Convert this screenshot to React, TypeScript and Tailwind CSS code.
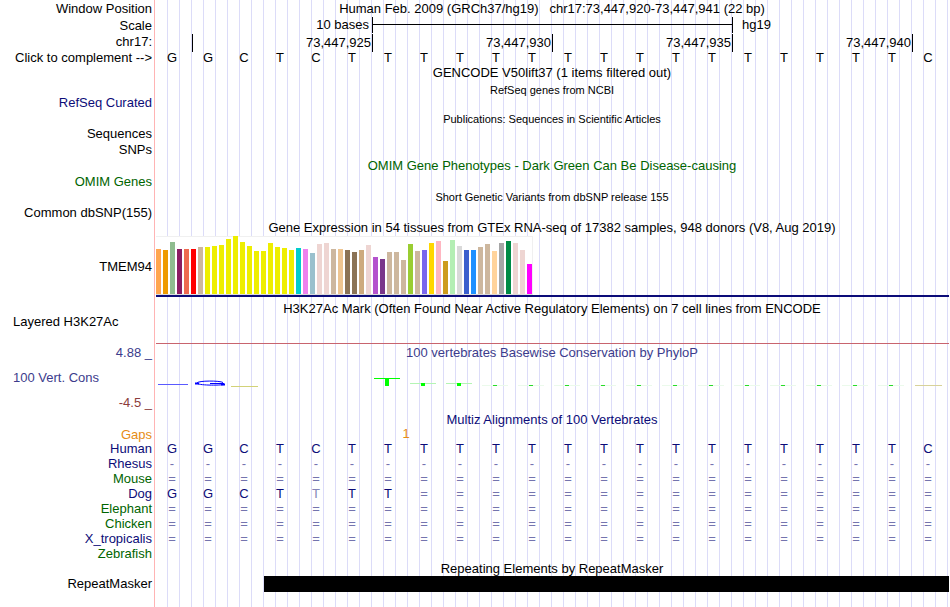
import React from 'react';

const NAVY = 'text-[#0c0c78]';
const GREEN = 'text-[#006400]';

const gtexBars: [string, number][] = [
  ['#FFA54F', 45], ['#EE9A00', 44], ['#8FBC8F', 52], ['#8B1C62', 45], ['#EE6A50', 45], ['#FF0000', 45],
  ['#CDB79E', 47], ['#EEEE00', 47], ['#EEEE00', 48], ['#EEEE00', 49], ['#EEEE00', 55], ['#EEEE00', 58],
  ['#EEEE00', 52], ['#EEEE00', 48], ['#EEEE00', 43], ['#EEEE00', 43], ['#EEEE00', 51], ['#EEEE00', 47],
  ['#EEEE00', 46], ['#EEEE00', 44], ['#00CDCD', 46], ['#EE82EE', 45], ['#9AC0CD', 41], ['#EED5D2', 50],
  ['#EED5D2', 51], ['#CDB79E', 45], ['#EEC591', 45], ['#8B7355', 44], ['#8B7355', 42], ['#CDAA7D', 44],
  ['#EED5D2', 49], ['#B452CD', 37], ['#7A378B', 35], ['#CDB79E', 42], ['#CDB79E', 42], ['#CDB79E', 34],
  ['#9ACD32', 50], ['#CDB79E', 43], ['#7A67EE', 44], ['#FFD700', 51], ['#FFB6C1', 53], ['#CD9B1D', 33],
  ['#B4EEB4', 54], ['#D9D9D9', 48], ['#3A5FCD', 44], ['#1E90FF', 44], ['#CDB79E', 47], ['#CDB79E', 50],
  ['#FFD39B', 43], ['#A6A6A6', 51], ['#008B45', 53], ['#EED5D2', 51], ['#EED5D2', 44], ['#FF00FF', 30],
];

const sequence = 'GGCTCTTTTTTTTTTTTTTTTC';
const positions = ['73,447,925', '73,447,930', '73,447,935', '73,447,940'];

const species = [
  { name: 'Human', color: NAVY, bases: sequence },
  { name: 'Rhesus', color: NAVY, bases: '-'.repeat(22) },
  { name: 'Mouse', color: GREEN, bases: '='.repeat(22) },
  { name: 'Dog', color: NAVY, bases: 'GGCTtTT' + '='.repeat(15) },
  { name: 'Elephant', color: GREEN, bases: '='.repeat(22) },
  { name: 'Chicken', color: GREEN, bases: '='.repeat(22) },
  { name: 'X_tropicalis', color: NAVY, bases: '='.repeat(22) },
  { name: 'Zebrafish', color: GREEN, bases: '' },
];

interface RowProps {
  height: string;
  label?: React.ReactNode;
  labelClass?: string;
  children?: React.ReactNode;
}

const Row: React.FC<RowProps> = ({ height, label, labelClass = '', children }) => (
  <div className={`grid grid-cols-[154px_1fr] ${height}`}>
    <div className={`flex items-center justify-end pr-0.5 ${labelClass}`}>{label}</div>
    <div className="min-w-0">{children}</div>
  </div>
);

const Title: React.FC<{ className?: string; children: React.ReactNode }> = ({ className = '', children }) => (
  <h2 className={`flex h-full items-center justify-center whitespace-pre ${className}`}>{children}</h2>
);

// lower case marks a weakly aligned base
const baseColor = (base: string, color: string) => {
  if (base === '-' || base === '=') return 'text-[#7474ae]';
  if (base === 't') return 'text-[#8484b8]';
  return color;
};

const Bases: React.FC<{ bases: string; color?: string }> = ({ bases, color = '' }) => (
  <div className="mr-1 grid h-full grid-cols-[repeat(22,minmax(0,1fr))] items-center text-center">
    {bases.split('').map((base, i) => (
      <span key={i} className={baseColor(base, color)}>{base.toUpperCase()}</span>
    ))}
  </div>
);

const GridLines = () => (
  <div className="absolute inset-y-0 right-0 left-[154px] -z-10 flex border-l border-[#ffb4b4] pr-0.5 pl-px" aria-hidden="true">
    {Array.from({ length: 66 }, (_, i) => (
      <div key={i} className="flex-1 border-r border-[#dcdcf8]" />
    ))}
  </div>
);

const Scale = () => (
  <div className="mr-px ml-[3px] grid h-4 grid-cols-[repeat(22,minmax(0,1fr))]">
    <span className="col-span-6 border-r border-black pr-[3px] text-right">10 bases</span>
    <div className="col-span-10 border-r border-black">
      <div className="h-2 border-b border-black" />
    </div>
    <span className="col-span-6 pl-[9px]">hg19</span>
  </div>
);

const Ruler = () => (
  <div className="mr-px ml-[3px] grid h-[15px] grid-cols-[repeat(22,minmax(0,1fr))]">
    <div className="border-r border-black" />
    {positions.map((pos) => (
      <span key={pos} className="col-span-5 border-r border-black pr-px text-right leading-[18px]">{pos}</span>
    ))}
  </div>
);

const Expression = () => (
  <div className="mr-px ml-0.5 border-b-2 border-[#0c0c78]">
    <div className="flex h-[59px] w-fit items-end gap-0.5 border-t border-r border-b border-t-[#f0f0f0] border-r-[#f0f0f0] border-b-[#dcdcdc] bg-white">
      {gtexBars.map(([color, height], i) => (
        <div key={i} className="w-[5px]" style={{ backgroundColor: color, height }} />
      ))}
    </div>
  </div>
);

const LogoCell: React.FC<{ index: number }> = ({ index }) => {
  if (index === 0) return <path d="M4 8.5H34" stroke="#5a5aff" />;
  if (index === 1) {
    return (
      <g fill="none" stroke="#0000ff">
        <path d="M33 6.5C30 4.5 8 4.5 7 7C7 9.5 30 9.5 34 8.5M20 7.5H34" />
        <path d="M5 7.5H9M31 8.5H35" strokeWidth="2" />
      </g>
    );
  }
  if (index === 2) return <path d="M5 10.5H32" stroke="#d2d278" />;
  if (index === 21) return <path d="M5 9.5H32" stroke="#d8d29a" />;
  if (index < 6) return null;
  if (index === 6) return <path d="M4 2H30V3H19V10H15V3H4Z" fill="#00ff00" />;
  if (index < 9) {
    return (
      <g>
        <path d="M4 7.5H30" stroke="#b4f5b4" />
        <path d="M15 7H19V10H15Z" fill="#00ff00" />
      </g>
    );
  }
  return (
    <g>
      <path d="M4 9.5H30" stroke="#ebfaeb" />
      <path d="M15 9.5H19" stroke="#28dc28" />
    </g>
  );
};

const ConservationLogo = () => (
  <div className="mr-1 grid grid-cols-[repeat(22,minmax(0,1fr))] pt-3.5">
    {sequence.split('').map((_, i) => (
      <svg key={i} viewBox="0 0 36 14" className="h-3.5 w-full">
        <LogoCell index={i} />
      </svg>
    ))}
  </div>
);

const App = () => (
  <main className="relative isolate min-h-screen overflow-hidden bg-white pb-4 font-['Liberation_Sans',Arial,sans-serif] text-[13px] leading-4 text-black">
    <GridLines />

    <Row height="h-[17px]" label="Window Position">
      <Title>{'Human Feb. 2009 (GRCh37/hg19)   chr17:73,447,920-73,447,941 (22 bp)'}</Title>
    </Row>
    <Row height="h-[17px]" label="Scale"><Scale /></Row>
    <Row height="h-4" label="chr17:"><Ruler /></Row>
    <Row height="h-3.5" label={<button type="button">Click to complement --&gt;</button>}>
      <Bases bases={sequence} />
    </Row>

    <Row height="h-[18px]"><Title>GENCODE V50lift37 (1 items filtered out)</Title></Row>
    <Row height="h-3"><Title className="text-[11px]">RefSeq genes from NCBI</Title></Row>
    <Row height="h-[17px]" label="RefSeq Curated" labelClass={NAVY} />

    <Row height="h-[15px]"><Title className="text-[11px]">Publications: Sequences in Scientific Articles</Title></Row>
    <Row height="h-[15px]" label="Sequences" />
    <Row height="h-[17px]" label="SNPs" />

    <Row height="h-4"><Title className={GREEN}>OMIM Gene Phenotypes - Dark Green Can Be Disease-causing</Title></Row>
    <Row height="h-3.5" label="OMIM Genes" labelClass={GREEN} />

    <Row height="h-[17px]"><Title className="text-[11px]">Short Genetic Variants from dbSNP release 155</Title></Row>
    <Row height="h-3.5" label="Common dbSNP(155)" />

    <Row height="h-[17px]">
      <Title>Gene Expression in 54 tissues from GTEx RNA-seq of 17382 samples, 948 donors (V8, Aug 2019)</Title>
    </Row>
    <Row height="h-[61px]" label="TMEM94"><Expression /></Row>

    <Row height="mt-1 h-3.5"><Title>H3K27Ac Mark (Often Found Near Active Regulatory Elements) on 7 cell lines from ENCODE</Title></Row>
    <Row height="h-[29px]" label="Layered H3K27Ac" labelClass="self-start !justify-start pl-[13px] leading-[14px]">
      <div className="mr-px ml-0.5 h-full border-b border-[#c8646e]" />
    </Row>

    <Row height="h-[18px]" label="4.88 _" labelClass="text-[#3c3c8c]">
      <Title className="text-[#3c3c8c]">100 vertebrates Basewise Conservation by PhyloP</Title>
    </Row>
    <Row height="h-8" label="100 Vert. Cons" labelClass="!justify-start pl-[13px] text-[#3c3c8c]">
      <ConservationLogo />
    </Row>
    <Row height="h-[18px]" label="-4.5 _" labelClass="text-[#8c3c3c]" />

    <Row height="h-[15px]"><Title className={NAVY}>Multiz Alignments of 100 Vertebrates</Title></Row>
    <Row height="h-3.5" label="Gaps" labelClass="text-[#e68c14]">
      <div className="mr-1 grid grid-cols-[repeat(22,minmax(0,1fr))] text-center leading-[14px] text-[#e68c14]">
        <span className="col-span-2 col-start-7">1</span>
      </div>
    </Row>
    {species.map((s) => (
      <Row key={s.name} height="h-[15px]" label={s.name} labelClass={s.color}>
        <Bases bases={s.bases} color={NAVY} />
      </Row>
    ))}

    <Row height="h-[15px]"><Title>Repeating Elements by RepeatMasker</Title></Row>
    <Row height="h-[15px]" label="RepeatMasker">
      <div className="mr-px ml-[110px] h-full bg-black" />
    </Row>
  </main>
);

export default App;
